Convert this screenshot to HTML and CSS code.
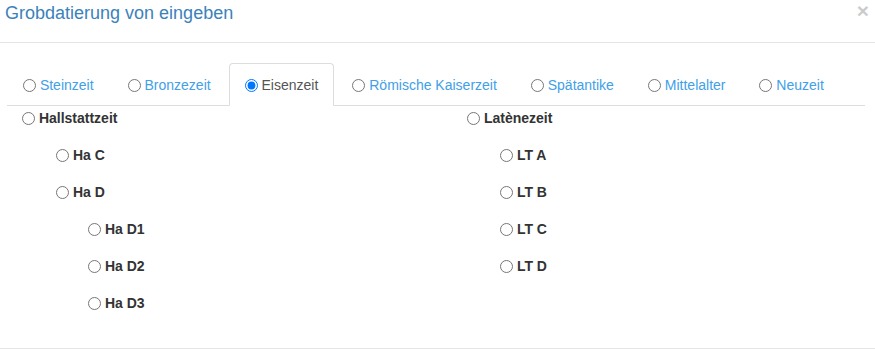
FILE: index.html
```html
<!DOCTYPE html>
<html lang="de">
<head>
  <meta charset="UTF-8">
  <title>Grobdatierung</title>
  <link rel="stylesheet" href="styles.css">
</head>
<body>

<div class="modal">
  <div class="modal-header">
    <button class="close" type="button">&times;</button>
    <h4 class="modal-title">Grobdatierung von eingeben</h4>
  </div>

  <div class="modal-body">
    <ul class="nav-tabs">
      <li><a href="#"><input type="radio" name="epoche"> Steinzeit</a></li>
      <li><a href="#"><input type="radio" name="epoche"> Bronzezeit</a></li>
      <li class="active"><a href="#"><input type="radio" name="epoche" checked> Eisenzeit</a></li>
      <li><a href="#"><input type="radio" name="epoche"> Römische Kaiserzeit</a></li>
      <li><a href="#"><input type="radio" name="epoche"> Spätantike</a></li>
      <li><a href="#"><input type="radio" name="epoche"> Mittelalter</a></li>
      <li><a href="#"><input type="radio" name="epoche"> Neuzeit</a></li>
    </ul>

    <div class="tab-content">
      <div class="col">
        <label class="opt"><input type="radio" name="stufe"> Hallstattzeit</label>
        <label class="opt lvl1"><input type="radio" name="stufe"> Ha C</label>
        <label class="opt lvl1"><input type="radio" name="stufe"> Ha D</label>
        <label class="opt lvl2"><input type="radio" name="stufe"> Ha D1</label>
        <label class="opt lvl2"><input type="radio" name="stufe"> Ha D2</label>
        <label class="opt lvl2"><input type="radio" name="stufe"> Ha D3</label>
      </div>
      <div class="col">
        <label class="opt"><input type="radio" name="stufe"> Latènezeit</label>
        <label class="opt lvl1"><input type="radio" name="stufe"> LT A</label>
        <label class="opt lvl1"><input type="radio" name="stufe"> LT B</label>
        <label class="opt lvl1"><input type="radio" name="stufe"> LT C</label>
        <label class="opt lvl1"><input type="radio" name="stufe"> LT D</label>
      </div>
    </div>
  </div>

  <div class="modal-footer"></div>
</div>

</body>
</html>
```

FILE: styles.css
```css
body { margin: 0; font-family: "Liberation Sans", Arial, sans-serif; font-size: 14px; color: #333; background-color: #fff; }
.modal { background-color: #fff; }
.modal-header { padding: 0 5px 16px; border-bottom: 1px solid #e5e5e5; }
.modal-title { margin: 0; font-size: 18px; font-weight: normal; line-height: 26px; color: #3b82bb; }
.close { float: right; margin: 0 1px 0 0; padding: 0; border: 0; background: none; font-family: "Liberation Sans", Arial, sans-serif; font-size: 21px; font-weight: bold; line-height: 21px; color: #000; opacity: .2; cursor: pointer; }

.modal-body { padding: 20px 10px 18px 7px; }
.nav-tabs { display: flex; margin: 0; padding: 0; list-style: none; border-bottom: 1px solid #ddd; }
.nav-tabs li { margin: 0 2px -1px 0; }
.nav-tabs a { display: flex; align-items: center; padding: 11px 15px 10px; line-height: 20px; border: 1px solid transparent; border-radius: 4px 4px 0 0; color: #41a0e8; text-decoration: none; white-space: pre; }
.nav-tabs .active a { color: #555; background-color: #fff; border-color: #ddd; border-bottom-color: transparent; }

input[type="radio"] { width: 13px; height: 13px; margin: 0; flex: none; }

.tab-content { display: grid; grid-template-columns: 445px 1fr; padding-top: 2px; }
.col { padding-left: 15px; }
.opt { display: flex; align-items: center; height: 20px; margin-bottom: 17px; font-weight: bold; white-space: pre; }
.lvl1 { padding-left: 34px; }
.lvl2 { padding-left: 66px; }
.col + .col .lvl1 { padding-left: 33px; }

.modal-footer { padding: 15px; border-top: 1px solid #e5e5e5; }
```
